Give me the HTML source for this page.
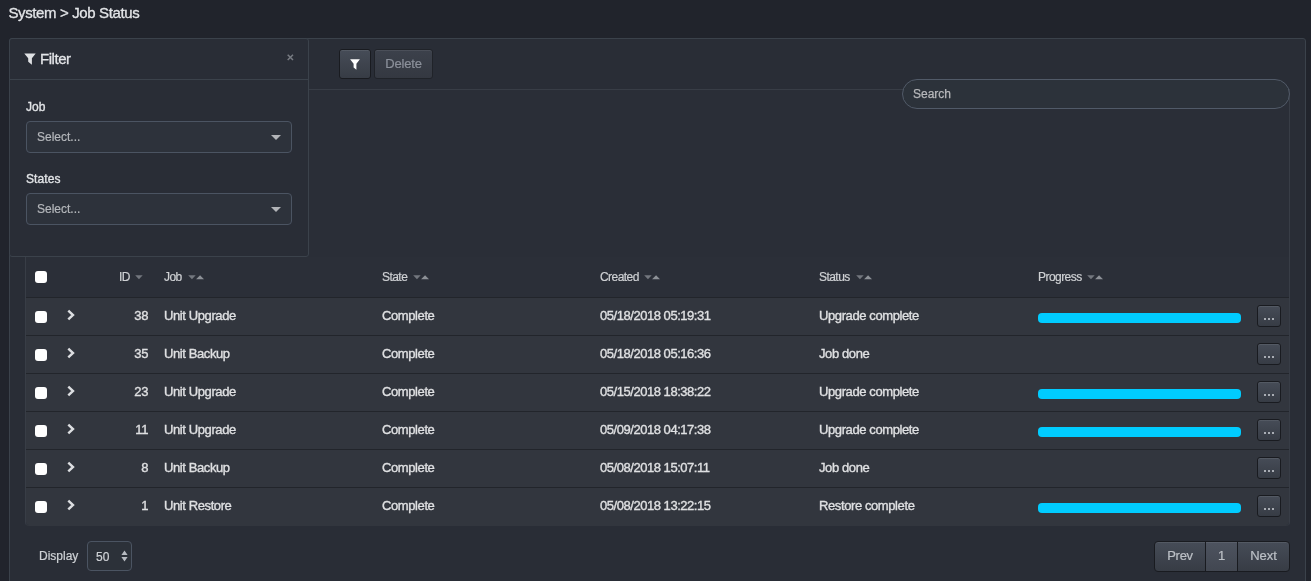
<!DOCTYPE html>
<html><head><meta charset="utf-8"><title>Job Status</title>
<style>
*{box-sizing:border-box;margin:0;padding:0}
html,body{width:1311px;height:581px;overflow:hidden;background:#21242c;font-family:"Liberation Sans",sans-serif;color:#e2e4e7}
body{position:relative;will-change:transform}
div,span,i,svg{position:absolute}
.title{left:8.4px;top:4px;font-size:15px;line-height:18px;color:#e4e6e9;white-space:nowrap;letter-spacing:-0.37px;-webkit-text-stroke:0.3px #e2e4e7}
.panel{left:9px;top:38px;width:1297px;height:560px;background:#292d36;border:1px solid #3b424b;border-radius:3px}
.inner{left:25px;top:89px;width:1265px;height:437px;border:1px solid #383d46;border-bottom-color:#32363e;border-radius:0 0 4px 4px;background:#2a2e37}
.thead{left:26px;top:257px;width:1263px;height:40px;background:#2b2f38}
.btn{background:linear-gradient(#464c57,#373c45);border:1px solid #191b20;border-radius:3px;color:#d5d8dc;text-align:center;box-shadow:inset 0 1px 0 rgba(255,255,255,.08)}
.fbtn{left:339px;top:49px;width:32px;height:30px}
.fbtn svg{left:9.8px;top:8.7px}
.dbtn{left:374px;top:49px;width:59px;letter-spacing:-0.15px;height:30px;font-size:13px;line-height:28px;color:#8b909a;-webkit-text-stroke:0.2px #8b909a;background:linear-gradient(#3c414b,#343841);border-color:#202329}
.search{left:902px;top:79px;width:388px;height:30px;border:1px solid #515a68;border-radius:15px;background:#2c323a}
.search span{left:10px;top:0;font-size:12px;line-height:28px;color:#b6b7ba;-webkit-text-stroke:0.25px #b6b7ba}
.filter{left:9px;top:38px;width:300px;height:219px;background:#292d36;border:1px solid #3b424b;border-radius:3px}
.fhead{left:0;top:0;width:298px;height:41px;border-bottom:1px solid #3b424b}
.ficon{left:13.9px;top:14.1px}
.ftitle{left:30px;top:11px;font-size:15px;line-height:18px;color:#e4e6e9;letter-spacing:-0.45px;-webkit-text-stroke:0.3px #e2e4e7}
.fx{left:276.6px;top:15.1px}
.flabel{left:16px;font-size:12px;line-height:14px;color:#e2e4e7;letter-spacing:0.1px;-webkit-text-stroke:0.35px #e2e4e7}
.sel{left:16px;width:266px;height:32px;border:1px solid #4b5462;border-radius:4px;background:#2d323b}
.sel span{left:10px;top:0;font-size:12px;line-height:30px;color:#b4b7bb;-webkit-text-stroke:0.2px #b4b7bb}
.sel i{left:244px;top:13px;width:0;height:0;border-left:5px solid transparent;border-right:5px solid transparent;border-top:5px solid #b2b4b8}
.cb{width:12px;height:12px;background:#fff;border-radius:3px}
.row .cb{top:13px !important}
.th{top:269px;transform:translateY(0.5px);font-size:12px;line-height:14px;color:#cfd1d4;letter-spacing:-0.55px;-webkit-text-stroke:0.2px #cfd1d4;white-space:nowrap}
.row{left:26px;width:1263px;height:38px;background:#32363e;border-top:1px solid #22252b}
.chev{left:40px;top:11px}
.td{top:10px;font-size:13px;line-height:16px;color:#dfe0e2;white-space:nowrap;letter-spacing:-0.4px;-webkit-text-stroke:0.35px #dfe0e2}
.td.dt{letter-spacing:-0.46px}
.td.id{left:79px;width:43px;text-align:right}
.bar{left:1012px;top:15px;width:203px;height:10px;border-radius:4px;background:#00ccff}
.more{left:1231px;top:7px;width:24px;height:22px;font-size:0;line-height:20px;color:transparent}
.more::after{content:'';position:absolute;left:6px;top:12px;width:2px;height:2px;background:#a9adb4;box-shadow:4px 0 #a9adb4,8px 0 #a9adb4}
.disp{left:39px;top:549px;font-size:12px;line-height:14px;color:#cfd2d6;-webkit-text-stroke:0.2px #cfd2d6}
.dsel{left:87px;top:541px;width:45px;height:30px;border:1px solid #4b5462;border-radius:4px;background:#2c3139}
.dsel span{left:8px;top:1px;font-size:12px;line-height:28px;color:#cfd2d6;-webkit-text-stroke:0.2px #cfd2d6}
.dsel svg{left:33px;top:8px}
.pager{left:1154px;top:541px;width:136px;height:31px}
.pg{top:0;height:31px;font-size:13px;line-height:28px;color:#bcc0c6;-webkit-text-stroke:0.2px #bcc0c6}
.pg.cur{background:linear-gradient(#4d535f,#424751)}

svg.ar{top:275px}

</style></head><body>
<div class="title">System &gt; Job Status</div>
<div class="panel"></div>
<div class="inner"></div>
<div class="thead"></div>
<div class="btn fbtn"><svg width="10" height="11" viewBox="0 0 10 11"><path d="M0.1 0.3 H9.9 L6.4 4.8 V10.8 L3.6 8.4 V4.8 Z" fill="#fff"/></svg></div>
<div class="btn dbtn">Delete</div>
<div class="search"><span>Search</span></div>
<div class="filter"><div class="fhead"><svg class="ficon" width="12" height="12" viewBox="0 0 12 12"><path d="M0.3 0.4 H11.7 L7.9 5.3 V11.7 L4.2 8.7 V5.3 Z" fill="#dfe1e4"/></svg><span class="ftitle">Filter</span><svg class="fx" width="7" height="7" viewBox="0 0 7 7"><path d="M0.7 0.7 L6 6 M6 0.7 L0.7 6" stroke="#777b82" stroke-width="1.5" fill="none"/></svg></div>
<div class="flabel" style="top:61px">Job</div><div class="sel" style="top:82px"><span>Select...</span><i></i></div>
<div class="flabel" style="top:133px">States</div><div class="sel" style="top:154px"><span>Select...</span><i></i></div></div>
<div class="cb" style="left:35px;top:271px"></div>
<div class="th" style="left:119px">ID</div><svg class="ar" style="left:135px" width="17" height="5" viewBox="0 0 17 5"><path d="M0.2 0.3 H7.7 L3.95 4.3 Z" fill="#73777e"/></svg>
<div class="th" style="left:164px">Job</div><svg class="ar" style="left:188px" width="17" height="5" viewBox="0 0 17 5"><path d="M0.2 0.3 H7.7 L3.95 4.3 Z" fill="#73777e"/><path d="M8.1 4.3 H16 L12.05 0.3 Z" fill="#8d9197"/></svg>
<div class="th" style="left:382px">State</div><svg class="ar" style="left:413px" width="17" height="5" viewBox="0 0 17 5"><path d="M0.2 0.3 H7.7 L3.95 4.3 Z" fill="#73777e"/><path d="M8.1 4.3 H16 L12.05 0.3 Z" fill="#8d9197"/></svg>
<div class="th" style="left:600px">Created</div><svg class="ar" style="left:644px" width="17" height="5" viewBox="0 0 17 5"><path d="M0.2 0.3 H7.7 L3.95 4.3 Z" fill="#73777e"/><path d="M8.1 4.3 H16 L12.05 0.3 Z" fill="#8d9197"/></svg>
<div class="th" style="left:819px">Status</div><svg class="ar" style="left:856px" width="17" height="5" viewBox="0 0 17 5"><path d="M0.2 0.3 H7.7 L3.95 4.3 Z" fill="#73777e"/><path d="M8.1 4.3 H16 L12.05 0.3 Z" fill="#8d9197"/></svg>
<div class="th" style="left:1038px">Progress</div><svg class="ar" style="left:1087px" width="17" height="5" viewBox="0 0 17 5"><path d="M0.2 0.3 H7.7 L3.95 4.3 Z" fill="#73777e"/><path d="M8.1 4.3 H16 L12.05 0.3 Z" fill="#8d9197"/></svg>
<div class="row" style="top:297px">
<div class="cb" style="left:9px;top:13px"></div>
<svg class="chev" width="10" height="12" viewBox="0 0 10 12"><path d="M2.3 1.6 L7 6 L2.3 10.4" fill="none" stroke="#dcdee1" stroke-width="2.4"/></svg>
<div class="td id">38</div><div class="td" style="left:138px">Unit Upgrade</div><div class="td" style="left:356px">Complete</div><div class="td dt" style="left:574px">05/18/2018 05:19:31</div><div class="td" style="left:793px">Upgrade complete</div>
<div class="bar"></div>
<div class="btn more">...</div>
</div>
<div class="row" style="top:335px">
<div class="cb" style="left:9px;top:13px"></div>
<svg class="chev" width="10" height="12" viewBox="0 0 10 12"><path d="M2.3 1.6 L7 6 L2.3 10.4" fill="none" stroke="#dcdee1" stroke-width="2.4"/></svg>
<div class="td id">35</div><div class="td" style="left:138px">Unit Backup</div><div class="td" style="left:356px">Complete</div><div class="td dt" style="left:574px">05/18/2018 05:16:36</div><div class="td" style="left:793px">Job done</div>
<div class="btn more">...</div>
</div>
<div class="row" style="top:373px">
<div class="cb" style="left:9px;top:13px"></div>
<svg class="chev" width="10" height="12" viewBox="0 0 10 12"><path d="M2.3 1.6 L7 6 L2.3 10.4" fill="none" stroke="#dcdee1" stroke-width="2.4"/></svg>
<div class="td id">23</div><div class="td" style="left:138px">Unit Upgrade</div><div class="td" style="left:356px">Complete</div><div class="td dt" style="left:574px">05/15/2018 18:38:22</div><div class="td" style="left:793px">Upgrade complete</div>
<div class="bar"></div>
<div class="btn more">...</div>
</div>
<div class="row" style="top:411px">
<div class="cb" style="left:9px;top:13px"></div>
<svg class="chev" width="10" height="12" viewBox="0 0 10 12"><path d="M2.3 1.6 L7 6 L2.3 10.4" fill="none" stroke="#dcdee1" stroke-width="2.4"/></svg>
<div class="td id">11</div><div class="td" style="left:138px">Unit Upgrade</div><div class="td" style="left:356px">Complete</div><div class="td dt" style="left:574px">05/09/2018 04:17:38</div><div class="td" style="left:793px">Upgrade complete</div>
<div class="bar"></div>
<div class="btn more">...</div>
</div>
<div class="row" style="top:449px">
<div class="cb" style="left:9px;top:13px"></div>
<svg class="chev" width="10" height="12" viewBox="0 0 10 12"><path d="M2.3 1.6 L7 6 L2.3 10.4" fill="none" stroke="#dcdee1" stroke-width="2.4"/></svg>
<div class="td id">8</div><div class="td" style="left:138px">Unit Backup</div><div class="td" style="left:356px">Complete</div><div class="td dt" style="left:574px">05/08/2018 15:07:11</div><div class="td" style="left:793px">Job done</div>
<div class="btn more">...</div>
</div>
<div class="row" style="top:487px;border-radius:0 0 3px 3px">
<div class="cb" style="left:9px;top:13px"></div>
<svg class="chev" width="10" height="12" viewBox="0 0 10 12"><path d="M2.3 1.6 L7 6 L2.3 10.4" fill="none" stroke="#dcdee1" stroke-width="2.4"/></svg>
<div class="td id">1</div><div class="td" style="left:138px">Unit Restore</div><div class="td" style="left:356px">Complete</div><div class="td dt" style="left:574px">05/08/2018 13:22:15</div><div class="td" style="left:793px">Restore complete</div>
<div class="bar"></div>
<div class="btn more">...</div>
</div>
<div class="disp">Display</div><div class="dsel"><span>50</span><svg width="7" height="12" viewBox="0 0 7 12"><path d="M3.5 0.6 L6.6 4.9 H0.4 Z M3.5 11.4 L6.6 7.1 H0.4 Z" fill="#b6bac0"/></svg></div>
<div class="pager"><div class="btn pg" style="left:0;width:52px;border-radius:4px 0 0 4px;letter-spacing:-0.3px">Prev</div><div class="btn pg cur" style="left:51px;width:33px;border-radius:0">1</div><div class="btn pg" style="left:83px;width:53px;border-radius:0 4px 4px 0">Next</div></div>
</body></html>
